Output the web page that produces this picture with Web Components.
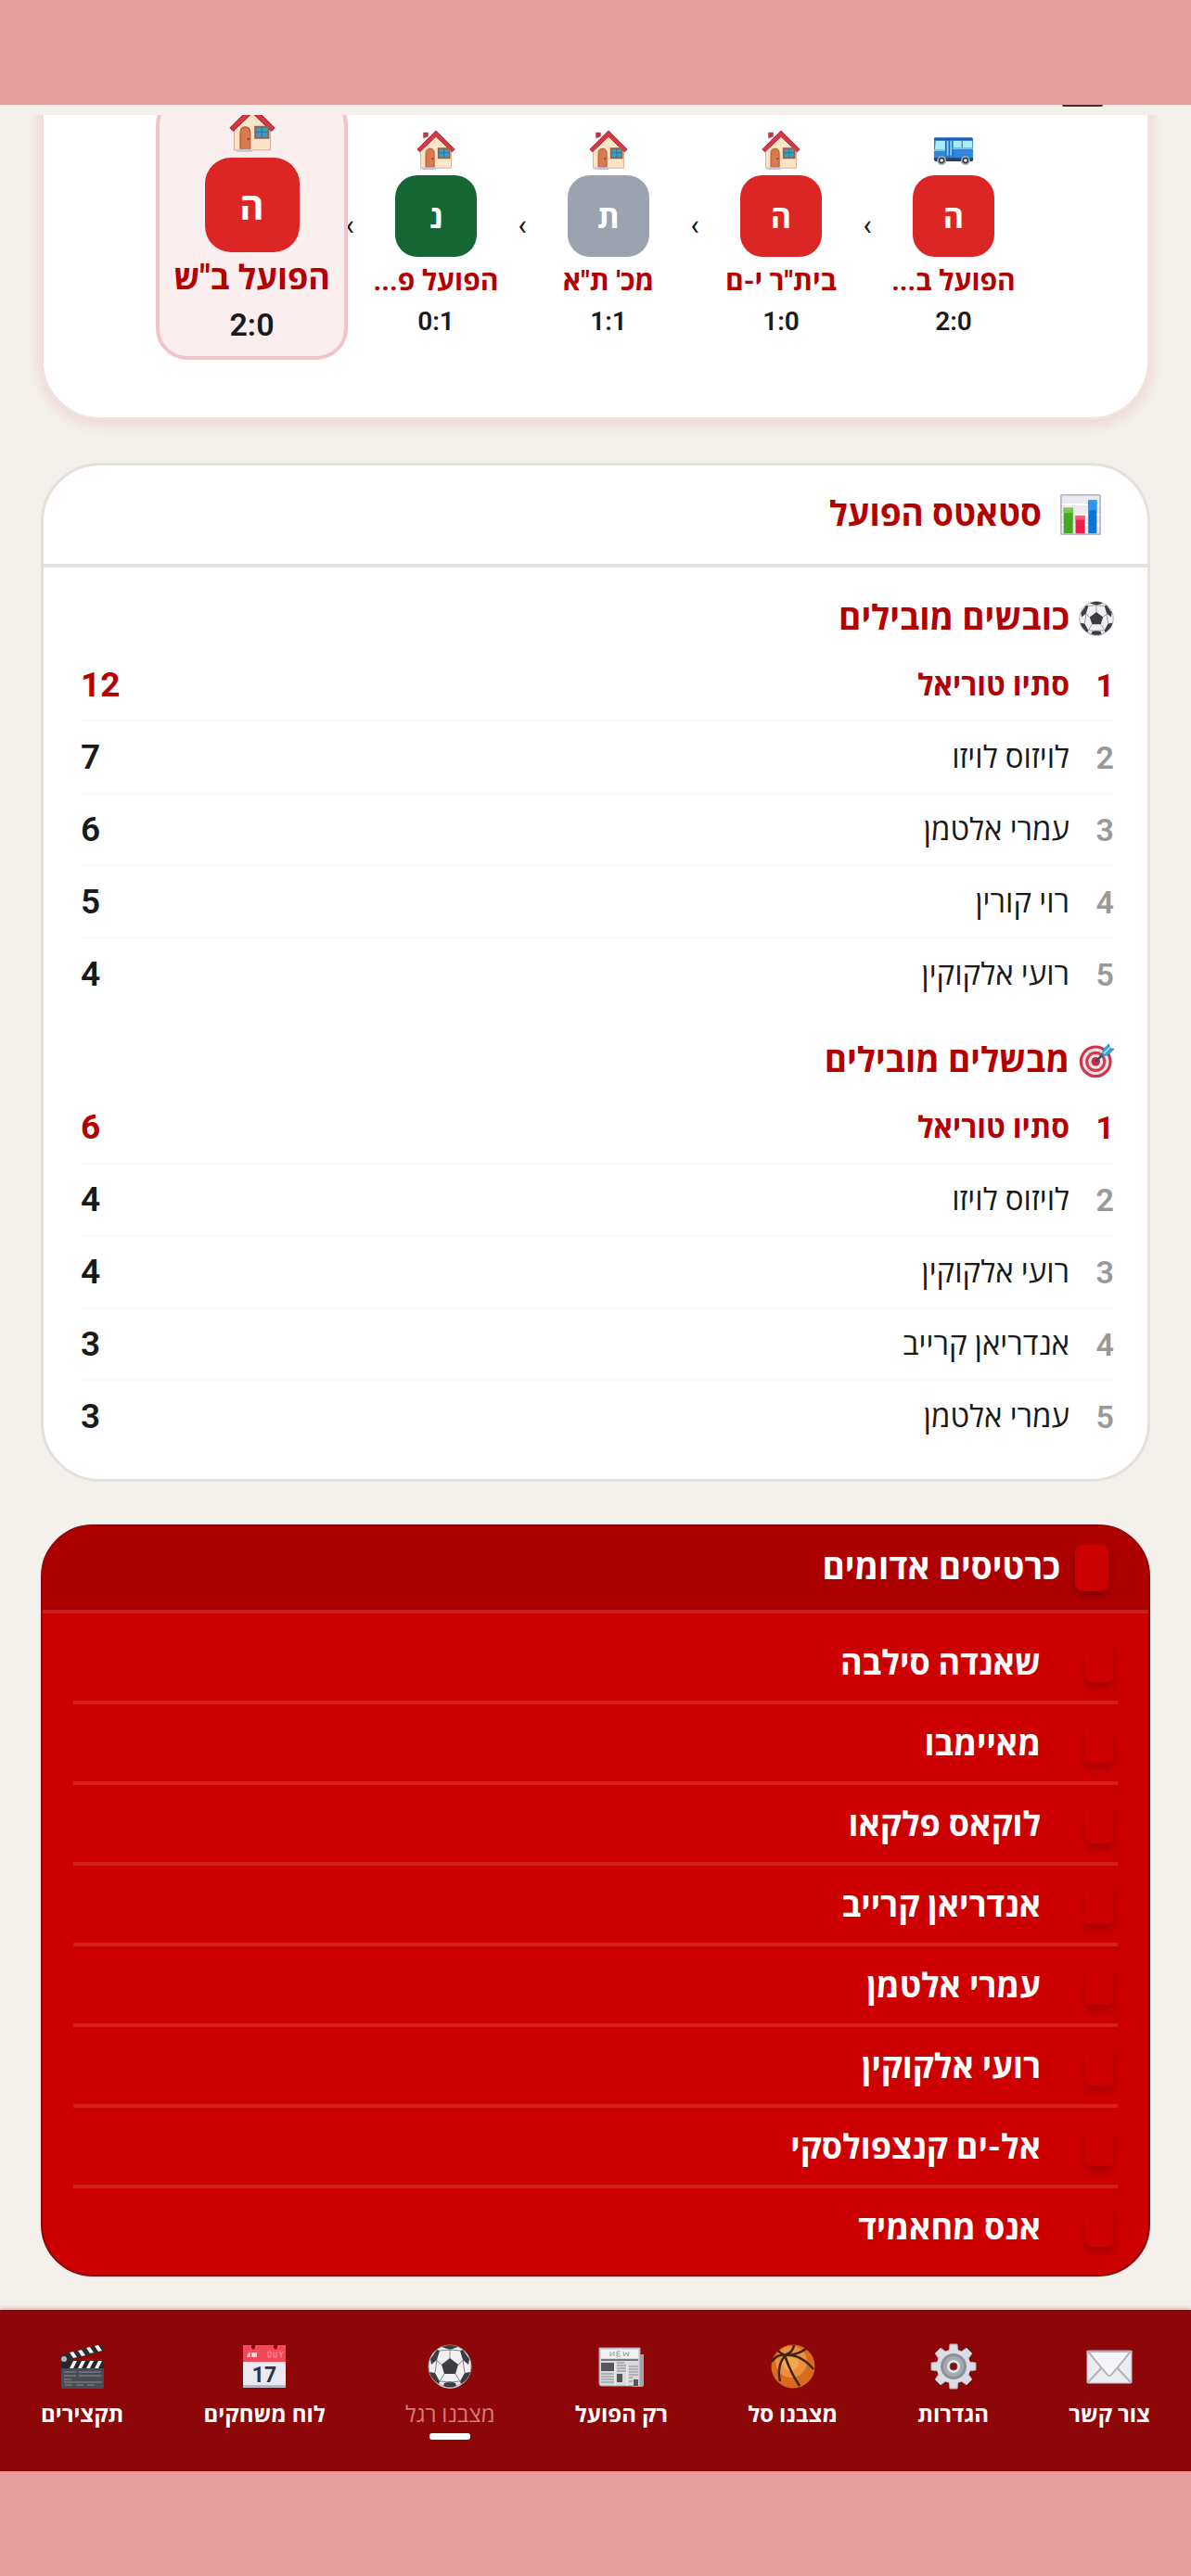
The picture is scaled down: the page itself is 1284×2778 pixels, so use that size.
<!DOCTYPE html>
<html lang="he" dir="rtl">
<head>
<meta charset="UTF-8">
<meta name="viewport" content="width=device-width, initial-scale=1">
<title>מצבנו רגל</title>
<style>
    :root {
        --page: #f4f1ec;
        --line: #e6e0dc;
        --brand: #b30000;
        --ink: #1a1a1a;
        --red: #cc0000;
        --red-dark: #ad0000;
        --nav: #8e0708;
        --strip: #e59e9e;
    }

    body {
        margin: 0;
        background: var(--page);
        color: var(--ink);
        font-family: Roboto, "Open Sans", sans-serif;
    }
</style>
</head>
<body>
<app-shell>
    <recent-form></recent-form>
    <stats-card heading="סטאטס הפועל">
        <leader-table icon="soccer" heading="כובשים מובילים" data-list="scorers"></leader-table>
        <leader-table icon="target" heading="מבשלים מובילים" data-list="assists"></leader-table>
    </stats-card>
    <red-cards heading="כרטיסים אדומים"></red-cards>
    <bottom-nav slot="nav"></bottom-nav>
</app-shell>

<script>
const ICONS = {
    house: `
        <path d="M9 10V3h6v5z" fill="#c8323c"/>
        <path d="M6 22 24 5l18 17v23H6z" fill="#fde3c8" stroke="#dcae8c"/>
        <path d="M2 23 24 1l22 22-3 3L24 8 5 26z" fill="#d33843" stroke="#a82832"/>
        <path d="M12 44V28q0-6 5-6t5 6v16z" fill="#d9794e" stroke="#a9552f"/>
        <circle cx="20" cy="34" r="1" fill="#7a3a1c"/>
        <path d="M27 22h13v11H27z" fill="#3f9cc0" stroke="#96644a" stroke-width="2"/>
        <path d="M33.500 22v11M27 27h13" stroke="#26789c"/>
        <path d="M8 44h16v3H8z" fill="#c9c6dc"/>`,
    bus: `
        <path d="M2 10h43q2 0 2 3v20q0 3-3 3H4q-3 0-3-3V14q0-4 1-4z" fill="#2f86dc"/>
        <path d="M2 9h43q2 0 2 3H1q0-3 1-3z" fill="#1b5fb4"/>
        <path d="M3 13h11v11H2zM23 13h23v8H23z" fill="#a9ecfb"/>
        <path d="M16 13h2v17h-2zM20 13h2v17h-2z" fill="#8bd3f5"/>
        <path d="M15 12v20M19 12v20M23 12v20M34 13v8" stroke="#1a5eae"/>
        <path d="M1 24h13M23 22h24" stroke="#7fc1f2" stroke-width="2"/>
        <path d="M1 33h46v3q0 1-2 1H3q-2 0-2-2z" fill="#243c69"/>
        <g fill="#2f3440" stroke="#9aa4b4" stroke-width="2"><circle cx="10" cy="36" r="4.500"/><circle cx="38" cy="36" r="4.500"/></g>
        <g fill="#e4e8ee"><circle cx="10" cy="36" r="2"/><circle cx="38" cy="36" r="2"/></g>`,
    chart: `
        <rect x="1" y="1" width="46" height="46" rx="1" fill="#eceaf2" stroke="#b9b8c6" stroke-width="2"/>
        <path d="M2 12h44M2 24h44M2 36h44" stroke="#fff" stroke-width="2"/>
        <path d="M4 16h11v30H4z" fill="#45a81e"/><path d="M4 16h11v6H4z" fill="#79c84e"/>
        <path d="M18 25h11v21H18z" fill="#f01c48"/><path d="M18 25h11v5H18z" fill="#f5607c"/>
        <path d="M33 7h10v39H33z" fill="#0a74dc"/><path d="M33 7h10v12H33z" fill="#2899ee"/>`,
    soccer: `
        <circle cx="24" cy="24" r="23" fill="#f0f0f3" stroke="#a3a3ab"/>
        <path d="M5 36q8 9 19 9t19-9q-7 12-19 12T5 36z" fill="#c4c4cc"/>
        <g fill="#3c3c41">
            <path d="m24 15 9 7-3 10H18l-3-10z"/>
            <path d="M15 3q9-4 18 0l-9 3zM3 16 10 6l3 1-3 10-6 5zM45 16 38 6l-3 1 3 10 6 5z"/>
            <path d="m2 30 6 1 5 9-1 3Q4 38 2 30zM46 30l-6 1-5 9 1 3q8-5 10-13zM18 42l6-2 6 2 1 3q-7 3-14 0z"/>
        </g>
        <path d="M24 15V6M33 22l6-5M30 32l5 8M18 32l-5 8M15 22l-6-5M13 7l11-1 11 1M8 31l2-14M40 31l-2-14M13 40l11 1 11-1" fill="none" stroke="#85858d"/>`,
    target: `
        <circle cx="23" cy="25" r="22" fill="#cf3449"/>
        <circle cx="23" cy="25" r="18" fill="#f7e4e6"/>
        <circle cx="23" cy="25" r="14" fill="#d63c50"/>
        <circle cx="23" cy="25" r="10" fill="#f7e4e6"/>
        <circle cx="23" cy="25" r="6" fill="#c32a40"/>
        <path d="m23 25 15-15" stroke="#27546e" stroke-width="3"/>
        <path d="m33 9 8-8 1 6 6 1-8 8-8 1z" fill="#35a9d4" stroke="#2079a8"/>
        <path d="m34 14 9-9" stroke="#9de1f4" stroke-width="2"/>`,
    mail: `
        <rect x="0" y="7" width="48" height="35" rx="1" fill="#ececf0" stroke="#bcbcc4"/>
        <path d="m1 41 16-17M47 41 31 24" stroke="#b2b2ba" stroke-width="2"/>
        <path d="m1 8 20 24q3 4 6 0L47 8z" fill="#f6f6f9" stroke="#b2b2ba" stroke-width="2"/>`,
    gear: `
        <g fill="#dcdce4" stroke="#a6a6b2">
            <path d="M20 0h8l1 8h-10zM20 48h8l1-8h-10zM0 20v8l8 1v-10zM48 20v8l-8 1v-10z"/>
            <path d="m4 10 6-6 7 5-8 8zM44 10l-6-6-7 5 8 8zM4 38l6 6 7-5-8-8zM44 38l-6 6-7-5 8-8z"/>
        </g>
        <circle cx="24" cy="24" r="18.500" fill="#dcdce4"/>
        <circle cx="24" cy="24" r="14" fill="#8e919b"/>
        <circle cx="24" cy="24" r="11" fill="#a7aab3"/>
        <circle cx="24" cy="24" r="7" fill="#e4e4ea"/>
        <circle cx="24" cy="24" r="4" fill="#8e0708" stroke="#555"/>`,
    basketball: `
        <circle cx="24" cy="24" r="23.500" fill="#d96b1e"/>
        <circle cx="22" cy="19" r="17" fill="#ee8f3c"/>
        <circle cx="21" cy="20" r="9" fill="#f6a552"/>
        <path d="M15 12Q21 30 31 45M16 12Q6 22 10 40M14 12q18-2 32 15M1 19Q7 10 15 12 24 9 25 1M8 7q2 3 8 5 12 0 22-7" fill="none" stroke="#3f2412" stroke-width="2.500"/>`,
    news: `
        <path d="M40 11h8v33q0 2-3 2H36z" fill="#a5a7ad"/>
        <path d="M0 4h44v38q0 3 2 3H2q-2 0-2-3z" fill="#d9d9dc" stroke="#a0a2a8"/>
        <path d="M2 6h40v9H2z" fill="#f1f1f3"/>
        <path d="M12 8v5l4-5v5M23 8h-4v5h4M19 10.500h3M26 8l1 5 2-4 2 4 1-5" fill="none" stroke="#a1a1a5"/>
        <path d="M2 17h40" stroke="#77797f" stroke-width="2"/>
        <path d="M2 20h14v9H2zM19 32h6v9h-6zM37 38h5v7h-5z" fill="#55575c"/>
        <path d="M2 32h14M2 35h14M2 38h14M2 41h14M19 20h8M19 23h10M19 26h10M19 29h10M32 24h10M32 27h10M32 30h10M32 33h10M32 36h4M32 40h4" stroke="#85878d"/>
        <path d="M17 19v26M30 19v26" stroke="#f4f4f6"/>`,
    calendar: `
        <path d="M1 1h46v18H1z" fill="#f2495a"/>
        <path d="M1 19h46v27q0 1-1 1H2q-1 0-1-1z" fill="#e9e9f1"/>
        <path d="M1 44h46v3H1z" fill="#b6b6c4"/>
        <path d="M10 0h4v4q-2 3-4 0zM34 0h4v4q-2 3-4 0z" fill="#8e0708"/>
        <path d="m6 14 2-5v5m3-5v5m2-5v5m2-5v5" stroke="#ffd2d6" stroke-width="2"/>
        <path d="M28 8h3v6h-3zM34 8v6h3V8M40 8l2 3 2-3M42 11v3" fill="none" stroke="#fa8d97"/>
        <text x="24" y="41" text-anchor="middle" font-family="Roboto, sans-serif" font-size="23" font-weight="700" fill="#34343a">17</text>`,
    clapper: `
        <path d="M1 18h46v28q0 2-2 2H3q-2 0-2-2z" fill="#4b4b54"/>
        <path d="M1 18h46v8H1z" fill="#25252a"/>
        <path d="m10 26 4-8h4l-4 8zM19 26l4-8h4l-4 8zM28 26l4-8h4l-4 8zM37 26l4-8h4l-4 8z" fill="#f4f4f4"/>
        <path d="M0 12 44 0l3 7L4 19q-5-1-4-7z" fill="#2b2b30"/>
        <path d="m10 9 4-1 4 6-4 1zM19 7l4-1 4 6-4 1zM28 4l4-1 4 6-4 1zM37 2l4-1 4 6-4 1z" fill="#f4f4f4"/>
        <circle cx="4" cy="16" r="3" fill="#b5b5ba"/>
        <path d="M4 30h13M4 34h13M4 38h8M20 30h24M20 34h24M4 41h41M5 44h8M17 44h8M29 44h8" stroke="#8d8d98"/>`
};

const FORM = [
    { icon: 'bus', letter: 'ה', color: '#dc2626', name: 'הפועל ב...', score: '2:0' },
    { icon: 'house', letter: 'ה', color: '#dc2626', name: 'בית"ר י-ם', score: '1:0' },
    { icon: 'house', letter: 'ת', color: '#9ca3af', name: 'מכ\' ת"א', score: '1:1' },
    { icon: 'house', letter: 'נ', color: '#166534', name: 'הפועל פ...', score: '0:1' },
    { icon: 'house', letter: 'ה', color: '#dc2626', name: 'הפועל ב"ש', score: '2:0', current: true }
];

const LEADERS = {
    scorers: [['סתיו טוריאל', 12], ['לויזוס לויזו', 7], ['עמרי אלטמן', 6], ['רוי קורין', 5], ['רועי אלקוקין', 4]],
    assists: [['סתיו טוריאל', 6], ['לויזוס לויזו', 4], ['רועי אלקוקין', 4], ['אנדריאן קרייב', 3], ['עמרי אלטמן', 3]]
};

const SENT_OFF = ['שאנדה סילבה', 'מאיימבו', 'לוקאס פלקאו', 'אנדריאן קרייב', 'עמרי אלטמן', 'רועי אלקוקין', 'אל-ים קנצפולסקי', 'אנס מחאמיד'];

const NAV = [
    ['mail', 'צור קשר'],
    ['gear', 'הגדרות'],
    ['basketball', 'מצבנו סל'],
    ['news', 'רק הפועל'],
    ['soccer', 'מצבנו רגל', true],
    ['calendar', 'לוח משחקים'],
    ['clapper', 'תקצירים']
];

class BaseElement extends HTMLElement {
    connectedCallback() {
        if (!this.shadowRoot) {
            this.attachShadow({ mode: 'open' }).innerHTML = this.render();
        }
    }
}

class AppIcon extends BaseElement {
    render() {
        return `
            <style>
                :host { display: block; flex: none; width: 48px; height: 48px; }
                svg { display: block; width: 100%; height: 100%; overflow: visible; }
            </style>
            <svg viewBox="0 0 48 48" fill="none" direction="ltr" aria-hidden="true">${ICONS[this.getAttribute('name')]}</svg>
        `;
    }
}

class AppShell extends BaseElement {
    render() {
        return `
            <style>
                :host {
                    display: flex;
                    flex-direction: column;
                    min-height: 100vh;
                }
                .strip {
                    flex: none;
                    height: 113px;
                    background: var(--strip);
                }
                .peek {
                    flex: none;
                    display: flex;
                    height: 11px;
                    padding-inline-start: 95px;
                }
                .peek span {
                    width: 44px;
                    height: 2px;
                    background: #333;
                    border-radius: 0 0 4px 4px;
                }
                main {
                    flex: 1;
                    display: flex;
                    flex-direction: column;
                    gap: 46px;
                    padding: 0 44px 28px;
                    overflow: hidden;
                }
            </style>
            <div class="strip"></div>
            <div class="peek"><span></span></div>
            <main><slot></slot></main>
            <slot name="nav"></slot>
            <div class="strip"></div>
        `;
    }
}

class RecentForm extends BaseElement {
    render() {
        return `
            <style>
                /* the card starts above the visible part of the scroll area */
                :host {
                    display: block;
                    margin-top: -76px;
                    padding: 50px 0 62px;
                    background: #fff;
                    border: 3px solid #f0e2df;
                    border-radius: 64px;
                    box-shadow: 0 4px 16px rgba(204, 0, 0, 0.14);
                }
                ol {
                    display: flex;
                    align-items: center;
                    justify-content: center;
                    margin: 0;
                    padding: 0;
                    list-style: none;
                }
                .match {
                    display: flex;
                    flex-direction: column;
                    align-items: center;
                    flex: none;
                    width: 150px;
                    padding-top: 14px;
                }
                .match app-icon { width: 44px; height: 44px; }
                .badge {
                    display: grid;
                    place-items: center;
                    width: 88px;
                    height: 88px;
                    margin: 5px 0 8px;
                    border-radius: 24px;
                    color: #fff;
                    font-size: 34px;
                    font-weight: 700;
                }
                .name {
                    color: var(--brand);
                    font-size: 30px;
                    font-weight: 700;
                    line-height: 36px;
                    white-space: nowrap;
                }
                .score {
                    margin-top: 10px;
                    font-size: 28px;
                    font-weight: 600;
                    line-height: 32px;
                }
                .sep {
                    width: 36px;
                    padding-bottom: 6px;
                    font-size: 32px;
                    line-height: 36px;
                    text-align: center;
                }
                .current {
                    box-sizing: border-box;
                    width: 207px;
                    margin-inline: -16px -13px;
                    padding: 8px 0 14px;
                    background: #fbeeef;
                    border: 4px solid #f0c4c9;
                    border-radius: 34px;
                }
                .current app-icon { width: 52px; height: 52px; }
                .current .badge { width: 102px; height: 102px; border-radius: 28px; font-size: 40px; }
                .current .name { font-size: 36px; line-height: 40px; }
                .current .score { font-size: 34px; line-height: 40px; }
            </style>
            <ol>
                ${FORM.map((m) => `
                    <li class="match ${m.current ? 'current' : ''}">
                        <app-icon name="${m.icon}"></app-icon>
                        <span class="badge" style="background: ${m.color}">${m.letter}</span>
                        <span class="name">${m.name}</span>
                        <span class="score" dir="ltr">${m.score}</span>
                    </li>`).join('<li class="sep" aria-hidden="true">›</li>')}
            </ol>
        `;
    }
}

class StatsCard extends BaseElement {
    render() {
        return `
            <style>
                :host {
                    display: block;
                    background: #fff;
                    border: 3px solid var(--line);
                    border-radius: 64px;
                }
                header {
                    display: flex;
                    align-items: center;
                    gap: 20px;
                    height: 106px;
                    padding: 0 50px;
                    border-bottom: 4px solid var(--line);
                }
                header app-icon { width: 44px; height: 44px; }
                h2 {
                    margin: 0;
                    color: var(--brand);
                    font-size: 37px;
                    font-weight: 700;
                    line-height: 48px;
                }
                .body {
                    display: flex;
                    flex-direction: column;
                    gap: 32px;
                    padding: 31px 36px 30px 40px;
                }
            </style>
            <header><app-icon name="chart"></app-icon><h2>${this.getAttribute('heading')}</h2></header>
            <div class="body"><slot></slot></div>
        `;
    }
}

class LeaderTable extends BaseElement {
    render() {
        return `
            <style>
                :host { display: block; }
                h3 {
                    display: flex;
                    align-items: center;
                    gap: 10px;
                    margin: 0 0 10px;
                    color: var(--brand);
                    font-size: 37px;
                    font-weight: 700;
                    line-height: 48px;
                }
                h3 app-icon { width: 38px; height: 38px; }
                table {
                    width: 100%;
                    border-collapse: separate;
                    border-spacing: 0;
                }
                th, td {
                    height: 75px;
                    padding: 0;
                    border-bottom: 3px solid #fafafa;
                    line-height: 40px;
                }
                tr:last-child > * { border-bottom: 0; }
                th {
                    width: 48px;
                    color: #999;
                    font-size: 34px;
                    font-weight: 600;
                    text-align: start;
                }
                td { font-size: 33px; }
                td:last-child {
                    font-size: 37px;
                    font-weight: 600;
                    text-align: end;
                }
                tr:first-child > * { color: var(--brand); font-weight: 700; }
                tr:first-child td:nth-child(2) { font-size: 32px; }
            </style>
            <h3><app-icon name="${this.getAttribute('icon')}"></app-icon><span>${this.getAttribute('heading')}</span></h3>
            <table>
                ${LEADERS[this.dataset.list].map(([name, total], i) => `
                    <tr><th scope="row">${i + 1}</th><td>${name}</td><td>${total}</td></tr>`).join('')}
            </table>
        `;
    }
}

class RedCards extends BaseElement {
    render() {
        return `
            <style>
                :host {
                    display: block;
                    overflow: hidden;
                    background: var(--red);
                    border: 2px solid #8c0808;
                    border-radius: 56px;
                    color: #fff;
                }
                header {
                    display: flex;
                    align-items: center;
                    gap: 16px;
                    height: 90px;
                    padding: 0 43px;
                    background: var(--red-dark);
                    border-bottom: 4px solid #c62020;
                }
                h2 {
                    margin: 0;
                    font-size: 37px;
                    font-weight: 700;
                    line-height: 48px;
                }
                .card {
                    width: 36px;
                    height: 50px;
                    border-radius: 8px;
                    background: var(--red);
                    box-shadow: 0 4px 8px rgba(0, 0, 0, 0.25);
                }
                ul {
                    margin: 0;
                    padding: 11px 33px 10px;
                    list-style: none;
                }
                li {
                    display: flex;
                    align-items: center;
                    gap: 48px;
                    height: 83px;
                    padding-inline-start: 5px;
                    border-bottom: 4px solid #d61f1f;
                    font-size: 36px;
                    font-weight: 700;
                }
                li:last-child { border-bottom: 0; }
                li .card {
                    width: 30px;
                    height: 42px;
                    border-radius: 6px;
                    box-shadow: 0 6px 8px rgba(0, 0, 0, 0.18);
                }
            </style>
            <header><span class="card"></span><h2>${this.getAttribute('heading')}</h2></header>
            <ul>
                ${SENT_OFF.map((name) => `<li><span class="card"></span><span>${name}</span></li>`).join('')}
            </ul>
        `;
    }
}

class BottomNav extends BaseElement {
    render() {
        return `
            <style>
                :host {
                    display: block;
                    flex: none;
                    background: var(--nav);
                    box-shadow: 0 -2px 4px rgba(204, 0, 0, 0.25);
                }
                nav {
                    display: flex;
                    justify-content: space-between;
                    padding: 37px 44px 34px;
                }
                a {
                    display: flex;
                    flex-direction: column;
                    align-items: center;
                    color: #fff;
                    font-size: 24px;
                    font-weight: 700;
                    line-height: 32px;
                    text-decoration: none;
                    white-space: nowrap;
                }
                span { margin-top: 12px; }
                a::after {
                    content: "";
                    width: 44px;
                    height: 7px;
                    margin-top: 4px;
                    border-radius: 3px;
                }
                a[aria-current] { font-weight: 400; }
                a[aria-current] span { color: #d47c7c; }
                a[aria-current]::after { background: #fff; }
            </style>
            <nav>
                ${NAV.map(([icon, label, active]) => `
                    <a href="#${icon}" ${active ? 'aria-current="page"' : ''}><app-icon name="${icon}"></app-icon><span>${label}</span></a>`).join('')}
            </nav>
        `;
    }
}

customElements.define('app-icon', AppIcon);
customElements.define('app-shell', AppShell);
customElements.define('recent-form', RecentForm);
customElements.define('stats-card', StatsCard);
customElements.define('leader-table', LeaderTable);
customElements.define('red-cards', RedCards);
customElements.define('bottom-nav', BottomNav);
</script>
</body>
</html>
